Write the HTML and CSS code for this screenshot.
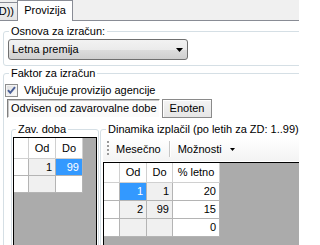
FILE: index.html
```html
<!DOCTYPE html>
<html lang="sl">
<head>
<meta charset="utf-8">
<title>Provizija</title>
<link rel="stylesheet" href="styles.css">
</head>
<body>
<div class="tabstrip">
  <div class="tab tab-prev"><span>D))</span></div>
  <div class="tab tab-active">Provizija</div>
</div>
<div class="page">
  <fieldset class="group g-osnova">
    <legend>Osnova za izračun:</legend>
    <div class="combo">
      <span class="combo-text">Letna premija</span>
      <svg class="combo-arrow" width="7" height="4" viewBox="0 0 7 4"><path d="M0 0H7L3.5 4Z" fill="#000"/></svg>
    </div>
  </fieldset>
  <fieldset class="group g-faktor">
    <legend>Faktor za izračun</legend>
    <label class="check">
      <span class="check-box"><svg width="11" height="11" viewBox="0 0 11 11"><path d="M2 5.2L4.3 7.8L9 2.2" fill="none" stroke="#4a5f97" stroke-width="2"/></svg></span>
      <span class="check-text">Vključuje provizijo agencije</span>
    </label>
    <div class="btabs">
      <div class="btab btab-sel">Odvisen od zavarovalne dobe</div>
      <div class="btab btab-plain">Enoten</div>
    </div>
    <div class="tabpage">
      <fieldset class="group g-zav">
        <legend>Zav. doba</legend>
        <div class="grid grid-zav">
          <div class="cells">
            <div class="c h"></div><div class="c h">Od</div><div class="c h">Do</div>
            <div class="c rh"></div><div class="c ro">1</div><div class="c sel">99</div>
            <div class="c rh"></div><div class="c ro"></div><div class="c"></div>
          </div>
        </div>
      </fieldset>
      <fieldset class="group g-din">
        <legend>Dinamika izplačil (po letih za ZD: 1..99)</legend>
        <div class="toolbar">
          <span class="grip"></span>
          <span class="tbtn tbtn-first">Mesečno</span>
          <span class="tsep"></span>
          <span class="tbtn tbtn-drop">Možnosti<svg class="drop-arrow" width="5" height="3" viewBox="0 0 5 3"><path d="M0 0H5L2.5 3Z" fill="#000"/></svg></span>
        </div>
        <div class="grid grid-din">
          <div class="cells">
            <div class="c h"></div><div class="c h">Od</div><div class="c h">Do</div><div class="c h">% letno</div>
            <div class="c rh"></div><div class="c sel">1</div><div class="c ro">1</div><div class="c">20</div>
            <div class="c rh"></div><div class="c ro">2</div><div class="c ro">99</div><div class="c">15</div>
            <div class="c rh"></div><div class="c ro"></div><div class="c ro"></div><div class="c">0</div>
          </div>
        </div>
      </fieldset>
    </div>
  </fieldset>
</div>
</body>
</html>
```
FILE: styles.css
```css
* { box-sizing: border-box; }
html, body { margin: 0; padding: 0; }
body {
  width: 299px;
  height: 245px;
  overflow: hidden;
  background: #fff;
  color: #000;
  font-family: "Liberation Sans", Arial, sans-serif;
  font-size: 11px;
  line-height: 13px;
}

/* top tab strip */
.tabstrip {
  display: flex;
  align-items: flex-end;
  height: 21px;
  background: #f0f0f0;
  border-bottom: 1px solid #898c95;
}
.tab { white-space: nowrap; overflow: hidden; }
.tab-prev {
  width: 17px;
  height: 18px;
  display: flex;
  justify-content: flex-end;
  align-items: center;
  padding-right: 3px;
  border-top: 1px solid #898c95;
  background: linear-gradient(#f2f2f2, #e4e4e4);
}
.tab-active {
  width: 56px;
  height: 21px;
  margin-bottom: -1px;
  border: 1px solid #898c95;
  border-bottom: none;
  background: #fff;
  text-align: center;
  line-height: 19px;
}

.page { padding: 4px 0 0 3px; }

/* group boxes */
.group {
  margin: 0;
  border: 1px solid #d5dfe5;
  border-radius: 3px;
  min-width: 0;
}
.group > legend { padding: 0 2px; line-height: 13px; }

.g-osnova { width: 320px; padding: 0 4px 5px 4px; }
.g-osnova > legend { margin-left: 1px; }

.combo {
  margin-top: 1px;
  width: 180px;
  height: 21px;
  border: 1px solid #707070;
  border-radius: 3px;
  background: linear-gradient(#f2f2f2 0%, #ebebeb 50%, #dddddd 50%, #cfcfcf 100%);
  display: flex;
  align-items: center;
  padding: 0 4px 0 3px;
}
.combo-text { flex: 1; }

.g-faktor { width: 320px; margin-top: 1px; padding: 0 0 0 1px; }
.g-faktor > legend { margin-left: 4px; }

.check { display: flex; align-items: center; margin-top: 4px; height: 13px; }
.check-box {
  width: 13px;
  height: 13px;
  border: 1px solid #8f8f8f;
  background: linear-gradient(135deg, #dcdcdc, #ffffff);
  box-shadow: inset 0 0 0 1px #f4f4f4;
  display: flex;
  align-items: center;
  justify-content: center;
}
.check-text { margin-left: 6px; }

.btabs { display: flex; gap: 2px; margin: 2px 0 0 2px; height: 19px; }
.btab { height: 19px; line-height: 17px; white-space: nowrap; }
.btab-sel {
  width: 153px;
  padding-left: 3px;
  background: #fbfbfb;
  border: 1px solid;
  border-color: #808080 #ffffff #ffffff #808080;
  box-shadow: inset 1px 1px 0 #c8c8c8;
}
.btab-plain {
  width: 50px;
  text-align: center;
  background: linear-gradient(#f4f4f4, #e6e6e6);
  border: 1px solid #8a8a8a;
  box-shadow: inset 1px 1px 0 #ffffff;
}

.tabpage { display: flex; gap: 1px; margin: 5px 0 0 6px; align-items: flex-start; }

.g-zav { flex: none; width: 88px; padding: 0 1px 0 1px; }
.g-zav > legend { margin-left: 3px; }
.g-din { flex: none; width: 220px; padding: 0 0 0 2px; }
.g-din > legend { margin-left: 3px; }

/* toolbar */
.toolbar {
  margin-top: 1px;
  height: 24px;
  display: flex;
  align-items: center;
  background: linear-gradient(#ffffff, #f3f3f3);
}
.grip {
  width: 2px;
  height: 16px;
  margin-left: 4px;
  background: repeating-linear-gradient(to bottom, #9a9a9a 0 2px, transparent 2px 4px);
}
.tbtn { padding: 0 4px; display: flex; align-items: center; }
.tbtn-first { margin-left: 3px; }
.tsep {
  width: 2px;
  height: 16px;
  margin-left: 4px;
  border-left: 1px solid #c6c6c6;
  border-right: 1px solid #ffffff;
}
.tbtn-drop { margin-left: 3px; }
.drop-arrow { margin-left: 8px; }

/* data grids */
.grid { border: 1px solid #000; background: #ababab; margin-top: 1px; overflow: hidden; }
.grid-zav { height: 115px; }
.grid-din { height: 90px; }
.cells { display: grid; width: max-content; }
.grid-zav .cells { grid-template-columns: 15px 27px 27px; grid-template-rows: 21px; grid-auto-rows: 17px; }
.grid-din .cells { grid-template-columns: 16px 27px 26px 47px; grid-template-rows: 20px; grid-auto-rows: 18px; }
.c {
  background: #fff;
  border-right: 1px solid #b4b4b4;
  border-bottom: 1px solid #b4b4b4;
  display: flex;
  align-items: center;
  justify-content: flex-end;
  padding-right: 3px;
}
.c.h { justify-content: center; padding: 0; border-color: #d0d0d0; }
.c.rh { padding: 0; }
.c.ro { background: #f0f0f0; }
.c.sel { background: #3399ff; color: #fff; }
```
